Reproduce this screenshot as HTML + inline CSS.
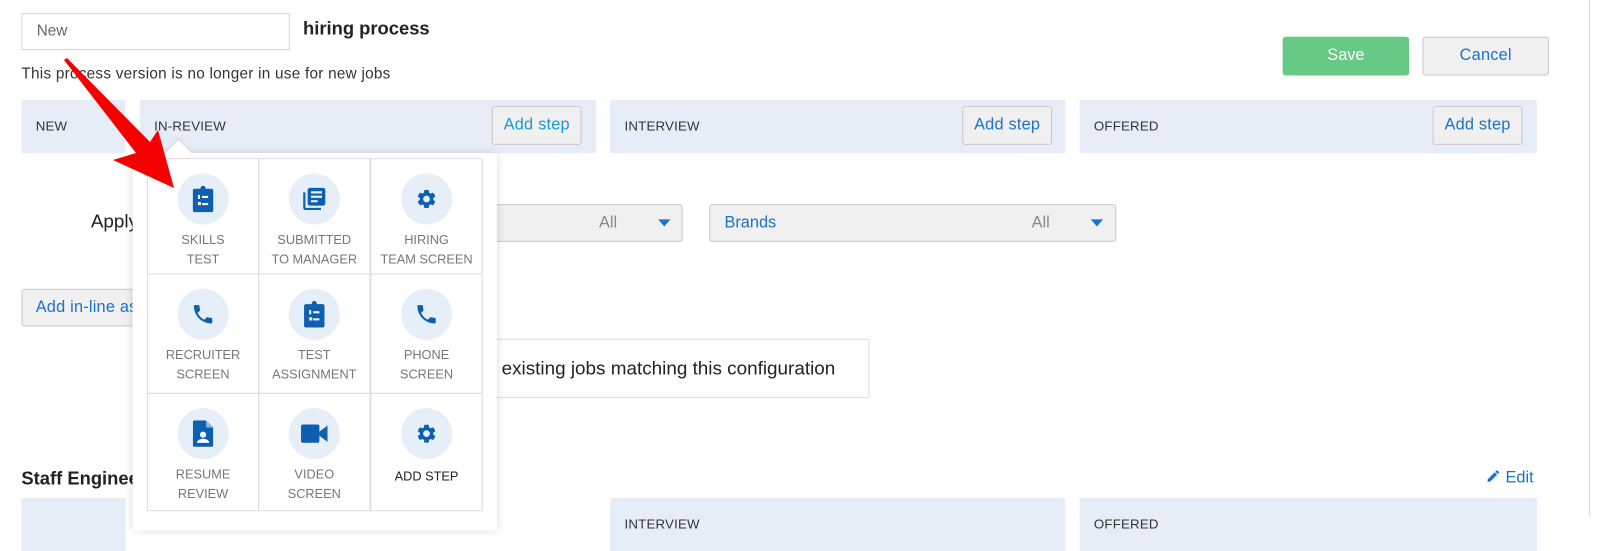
<!DOCTYPE html>
<html><head><meta charset="utf-8">
<style>
*{box-sizing:border-box;margin:0;padding:0}
body{width:1600px;height:517px;overflow:hidden;background:#fff;font-family:"Liberation Sans",sans-serif;position:relative;color:#222}
#w{position:absolute;left:0;top:0;width:1568px;height:507px;transform:scale(1.0204);transform-origin:0 0}
.a{position:absolute}
.lane{position:absolute;background:#e6edf6;height:52px}
.lane span{position:absolute;left:14px;top:18px;font-size:13px;color:#333;letter-spacing:.2px}
.btn{position:absolute;background:#f0f0f0;border:1px solid #c8c8c8;border-radius:3px;color:#1a73c8;font-size:16px;text-align:center;letter-spacing:.2px}
.dd{position:absolute;background:#f0f0f0;border:1px solid #c8c8c8;border-radius:3px;height:37px}
.cell{position:absolute;width:110px;border:1px solid #ddd;text-align:center;font-size:12.5px;color:#777;line-height:19px}
.circ{width:50px;height:50px;border-radius:50%;background:#e6eef8;margin:14px auto 6px;display:flex;align-items:center;justify-content:center}
</style></head><body>
<div id="w">
<div class="a" style="left:21px;top:13px;width:263px;height:36px;border:1px solid #d5d5d5;font-size:15px;color:#666;padding:8px 14px">New</div>
<div class="a" style="left:297px;top:18px;font-size:18px;font-weight:bold">hiring process</div>
<div class="a" style="left:21px;top:64px;font-size:15px;color:#333;letter-spacing:.25px">This process version is no longer in use for new jobs</div>
<div class="a" style="left:1257px;top:36px;width:124px;height:38px;background:#66c986;border-radius:3px;color:#fff;font-size:16px;text-align:center;line-height:37px">Save</div>
<div class="btn" style="left:1394px;top:36px;width:124px;height:38px;line-height:36px">Cancel</div>

<div class="lane" style="left:21px;top:98px;width:102px"><span>NEW</span></div>
<div class="lane" style="left:137px;top:98px;width:447px"><span>IN-REVIEW</span></div>
<div class="lane" style="left:598px;top:98px;width:446px"><span>INTERVIEW</span></div>
<div class="lane" style="left:1058px;top:98px;width:448px"><span>OFFERED</span></div>
<div class="btn" style="left:482px;top:104px;width:88px;height:38px;line-height:36px;color:#1a9ad6">Add step</div>
<div class="btn" style="left:943px;top:104px;width:88px;height:38px;line-height:36px">Add step</div>
<div class="btn" style="left:1404px;top:104px;width:88px;height:38px;line-height:36px">Add step</div>

<div class="a" style="left:89px;top:206px;font-size:18.5px">Apply</div>
<div class="dd" style="left:400px;top:200px;width:269px"><span class="a" style="left:186px;top:9px;color:#888;font-size:16px">All</span><span class="a" style="left:244px;top:14px;border:6px solid transparent;border-top:7px solid #1a73c8"></span></div>
<div class="dd" style="left:695px;top:200px;width:399px"><span class="a" style="left:14px;top:9px;color:#1a73c8;font-size:16px">Brands</span><span class="a" style="left:315px;top:9px;color:#888;font-size:16px">All</span><span class="a" style="left:373px;top:14px;border:6px solid transparent;border-top:7px solid #1a73c8"></span></div>
<div class="btn" style="left:21px;top:283px;width:220px;height:37px;line-height:35px;text-align:left;padding-left:13px">Add in-line assessment</div>
<div class="a" style="left:330px;top:332px;width:522px;height:58px;border:1px solid #ddd;font-size:18.5px;padding:17px 0 0 140px;color:#222;white-space:nowrap">to existing jobs matching this configuration</div>

<div class="a" style="left:21px;top:459px;font-size:18px;font-weight:bold">Staff Engineer</div>
<div class="a" style="left:1456px;top:459px;font-size:16px;color:#1a73c8"><svg width="15" height="15" viewBox="0 0 24 24" style="vertical-align:-1px"><path fill="#1a73c8" d="M3 17.25V21h3.75L17.81 9.94l-3.75-3.75L3 17.25zM20.71 7.04a1 1 0 000-1.41l-2.34-2.34a1 1 0 00-1.41 0l-1.83 1.83 3.75 3.75 1.83-1.83z"/></svg> Edit</div>
<div class="lane" style="left:21px;top:488px;width:102px"></div>
<div class="lane" style="left:598px;top:488px;width:446px"><span>INTERVIEW</span></div>
<div class="lane" style="left:1058px;top:488px;width:448px"><span>OFFERED</span></div>

<div class="a" style="left:130px;top:150px;width:357px;height:370px;background:#fff;box-shadow:0 0 8px rgba(0,0,0,.15)"></div>
<div class="a" style="left:166px;top:141px;width:18px;height:18px;background:#fff;transform:rotate(45deg);box-shadow:-2px -2px 3px rgba(0,0,0,.06)"></div>
<div class="a" style="left:144px;top:155px;width:330px;height:346px">
<div class="cell" style="left:0;top:0;height:114px"><div class="circ"><svg width="22" height="26" viewBox="0 0 22 26"><rect x="1" y="3" width="20" height="23" rx="2" fill="#0d5fb0"/><circle cx="11" cy="2.5" r="2.5" fill="#0d5fb0"/><rect x="6" y="9" width="2" height="4" fill="#fff"/><rect x="10" y="10" width="6" height="2" fill="#fff"/><rect x="6" y="16" width="3" height="3" fill="#fff"/><rect x="10" y="17" width="6" height="2" fill="#fff"/></svg></div>SKILLS<br>TEST</div>
<div class="cell" style="left:109px;top:0;height:114px"><div class="circ"><svg width="26" height="26" viewBox="0 0 24 24"><path fill="#0d5fb0" d="M4 6H2v14a2 2 0 002 2h14v-2H4V6zm16-4H8a2 2 0 00-2 2v12a2 2 0 002 2h12a2 2 0 002-2V4a2 2 0 00-2-2zm-1 9H9V9h10v2zm-4 4H9v-2h6v2zm4-8H9V5h10v2z"/></svg></div>SUBMITTED<br>TO MANAGER</div>
<div class="cell" style="left:219px;top:0;height:114px"><div class="circ"><svg width="22" height="22" viewBox="0 0 24 24"><path fill="#0d5fb0" d="M19.14 12.94a7.1 7.1 0 000-1.88l2.03-1.58a.5.5 0 00.12-.61l-1.92-3.32a.5.5 0 00-.59-.22l-2.39.96a7 7 0 00-1.620-.94l-.36-2.540A.5.5 0 0013.9 2.4h-3.84a.5.5 0 00-.48.41l-.36 2.54a7.4 7.4 0 00-1.62.94l-2.39-.96a.5.5 0 00-.59.22L2.7 8.87a.5.5 0 00.12.61l2.03 1.58a7.1 7.1 0 000 1.88l-2.03 1.58a.5.5 0 00-.12.61l1.92 3.32c.12.22.37.29.59.22l2.39-.96c.5.38 1.04.7 1.62.94l.36 2.54c.05.24.26.41.48.41h3.84c.24 0 .44-.17.48-.41l.36-2.54a7 7 0 001.62-.94l2.39.96c.22.08.47 0 .59-.22l1.92-3.32a.5.5 0 00-.12-.61l-2.03-1.58zM12 15.6a3.6 3.6 0 110-7.2 3.6 3.6 0 010 7.2z"/></svg></div>HIRING<br>TEAM SCREEN</div>
<div class="cell" style="left:0;top:113px;height:118px"><div class="circ"><svg width="24" height="24" viewBox="0 0 24 24"><path fill="#0d5fb0" d="M6.62 10.79a15.1 15.1 0 006.59 6.59l2.2-2.2a1 1 0 011.02-.24c1.12.37 2.330.57 3.57.57a1 1 0 011 1V20a1 1 0 01-1 1A17 17 0 013 4a1 1 0 011-1h3.5a1 1 0 011 1c0 1.25.2 2.45.57 3.57a1 1 0 01-.25 1.02l-2.2 2.2z"/></svg></div>RECRUITER<br>SCREEN</div>
<div class="cell" style="left:109px;top:113px;height:118px"><div class="circ"><svg width="22" height="26" viewBox="0 0 22 26"><rect x="1" y="3" width="20" height="23" rx="2" fill="#0d5fb0"/><circle cx="11" cy="2.5" r="2.5" fill="#0d5fb0"/><rect x="6" y="9" width="2" height="4" fill="#fff"/><rect x="10" y="10" width="6" height="2" fill="#fff"/><rect x="6" y="16" width="3" height="3" fill="#fff"/><rect x="10" y="17" width="6" height="2" fill="#fff"/></svg></div>TEST<br>ASSIGNMENT</div>
<div class="cell" style="left:219px;top:113px;height:118px"><div class="circ"><svg width="24" height="24" viewBox="0 0 24 24"><path fill="#0d5fb0" d="M6.62 10.79a15.1 15.1 0 006.59 6.59l2.2-2.2a1 1 0 011.02-.24c1.12.37 2.33.57 3.57.57a1 1 0 011 1V20a1 1 0 01-1 1A17 17 0 013 4a1 1 0 011-1h3.5a1 1 0 011 1c0 1.25.2 2.45.57 3.57a1 1 0 01-.25 1.02l-2.2 2.2z"/></svg></div>PHONE<br>SCREEN</div>
<div class="cell" style="left:0;top:230px;height:116px"><div class="circ"><svg width="20" height="26" viewBox="0 0 20 26"><path fill="#0d5fb0" d="M2 0h11l7 7v17a2 2 0 01-2 2H2a2 2 0 01-2-2V2a2 2 0 012-2z"/><path fill="#e6eef8" d="M13 0v7h7z" opacity=".6"/><circle cx="10" cy="14" r="3" fill="#fff"/><path fill="#fff" d="M4 22c0-3 4-4 6-4s6 1 6 4z"/></svg></div>RESUME<br>REVIEW</div>
<div class="cell" style="left:109px;top:230px;height:116px"><div class="circ"><svg width="26" height="18" viewBox="0 0 26 18"><rect x="0" y="0" width="18" height="18" rx="2" fill="#0d5fb0"/><path fill="#0d5fb0" d="M18 7l8-6v16l-8-6z"/></svg></div>VIDEO<br>SCREEN</div>
<div class="cell" style="left:219px;top:230px;height:116px;color:#222"><div class="circ"><svg width="22" height="22" viewBox="0 0 24 24"><path fill="#0d5fb0" d="M19.14 12.94a7.1 7.1 0 000-1.88l2.03-1.58a.5.5 0 00.12-.61l-1.92-3.32a.5.5 0 00-.59-.22l-2.39.96a7 7 0 00-1.62-.94l-.36-2.54A.5.5 0 0013.9 2.4h-3.84a.5.5 0 00-.48.41l-.36 2.54a7.4 7.4 0 00-1.62.94l-2.39-.96a.5.5 0 00-.59.22L2.7 8.87a.5.5 0 00.12.61l2.03 1.58a7.1 7.1 0 000 1.88l-2.03 1.58a.5.5 0 00-.12.61l1.92 3.32c.12.22.37.29.59.22l2.39-.96c.5.38 1.04.7 1.62.94l.36 2.54c.05.24.26.41.48.41h3.84c.24 0 .44-.17.48-.41l.36-2.54a7 7 0 001.62-.94l2.39.96c.22.08.47 0 .59-.22l1.92-3.32a.5.5 0 00-.12-.61l-2.03-1.58zM12 15.6a3.6 3.6 0 110-7.2 3.6 3.6 0 010 7.2z"/></svg></div><div style="margin-top:8px">ADD STEP</div></div>
</div>
</div>
<div class="a" style="left:1589px;top:0;width:1px;height:517px;background:#ddd"></div>
<svg class="a" style="left:0;top:0" width="300" height="260"><path fill="#f50000" d="M64 60 L67 58 L150 142 L158 130 L174 188 L113 160 L136 153 Z"/></svg>
</body></html>
